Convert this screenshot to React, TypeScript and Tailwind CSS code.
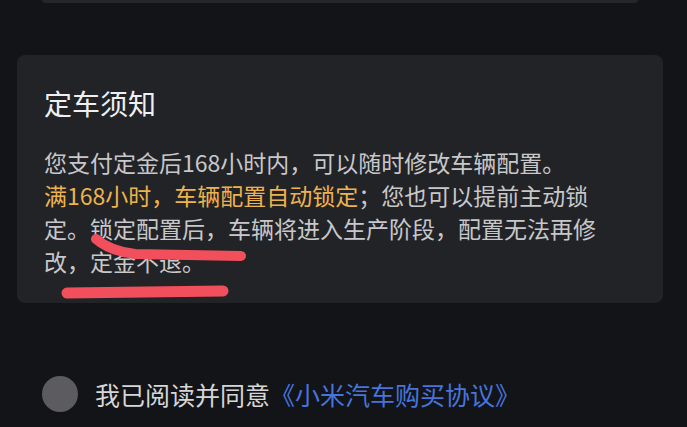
import React from "react";

export default function App() {
  return (
    <div
      className="relative h-[427px] w-[687px] overflow-hidden bg-[#131418]"
      style={{ fontFamily: '"Noto Sans CJK SC", "Noto Sans", sans-serif' }}
    >
      <div className="flex flex-col">
        {/* previous card edge */}
        <div className="mx-[42px] h-[3px] w-[596px] rounded-b-[4px] bg-[#25262a]" />

        {/* notice card */}
        <div className="mx-[17px] mt-[52px] flex h-[248px] w-[646px] flex-col rounded-[8px] bg-[#222327] pl-[27px] pt-[28px]">
          <div className="text-[28px] leading-[40px] text-[#efefef]">定车须知</div>
          <div className="mt-[23px] w-[570px] text-[23px] leading-[33px] text-[#c8c8ca]">
            <p>您支付定金后168小时内，可以随时修改车辆配置。</p>
            <p>
              <span className="text-[#efb34c]">满168小时，车辆配置自动锁定</span>；您也可以提前主动锁定。锁定配置后，车辆将进入生产阶段，配置无法再修改，定金不退。
            </p>
          </div>
        </div>

        {/* agreement row */}
        <div className="ml-[42px] mt-[73px] flex items-center">
          <div className="h-[36px] w-[36px] rounded-full bg-[#5c5c60]" />
          <div className="ml-[17px] text-[25px] leading-[36px] text-[#d6d6d6]">
            我已阅读并同意<span className="text-[#4674dc]">《小米汽车购买协议》</span>
          </div>
        </div>
      </div>

      {/* red hand-drawn underline marks */}
      <svg
        className="pointer-events-none absolute left-0 top-0"
        width="687"
        height="427"
        viewBox="0 0 687 427"
      >
        <path
          d="M96 239 Q 110 251 135 254 L 241 256"
          fill="none"
          stroke="#f24f5d"
          strokeWidth="10"
          strokeLinecap="round"
          strokeLinejoin="round"
        />
        <path
          d="M67 293 L 223 291"
          fill="none"
          stroke="#f24f5d"
          strokeWidth="11"
          strokeLinecap="round"
        />
      </svg>
    </div>
  );
}
